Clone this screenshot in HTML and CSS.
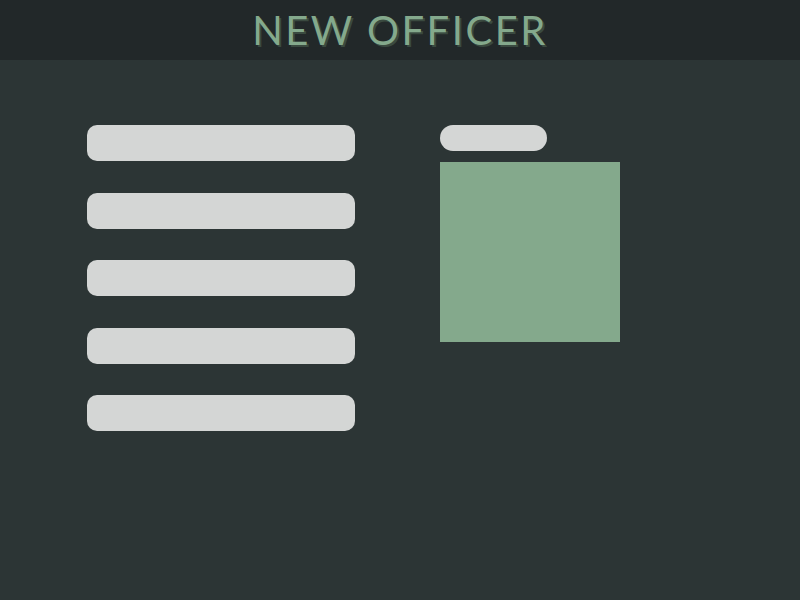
FILE: index.html
```html
<!DOCTYPE html>
<html>
<head>
<meta charset="utf-8">
<link rel="stylesheet" href="styles.css">
</head>
<body>
<header class="topbar"><h1 class="title">NEW OFFICER</h1></header>
<main class="content">
  <div class="fields">
    <div class="field"></div>
    <div class="field"></div>
    <div class="field"></div>
    <div class="field"></div>
    <div class="field"></div>
  </div>
  <div class="photo-col">
    <div class="pill"></div>
    <div class="photo"></div>
  </div>
</main>
</body>
</html>
```
FILE: styles.css
```css
html, body { margin: 0; padding: 0; }
body {
  background: #2c3535;
  width: 800px;
  height: 600px;
  overflow: hidden;
  font-family: "Lato", "Noto Sans", sans-serif;
}
.topbar {
  height: 60px;
  background: #222829;
  display: flex;
  align-items: center;
  justify-content: center;
}
.title {
  margin: 0;
  color: #84a98c;
  font-family: "Lato", sans-serif;
  font-weight: 400;
  font-size: 40px;
  letter-spacing: 2.5px;
  line-height: 60px;
  text-shadow: 2px 2px 0 #3a4a40;
}
.content {
  display: flex;
  padding: 65px 0 0 87px;
  gap: 85px;
}
.fields {
  display: flex;
  flex-direction: column;
  gap: 31.5px;
}
.field {
  width: 268px;
  height: 36px;
  border-radius: 10px;
  background: #d4d6d5;
}
.photo-col {
  display: flex;
  flex-direction: column;
  gap: 11px;
}
.pill {
  width: 107px;
  height: 26px;
  border-radius: 13px;
  background: #d4d6d5;
}
.photo {
  width: 180px;
  height: 180px;
  background: #84a98c;
}
```
